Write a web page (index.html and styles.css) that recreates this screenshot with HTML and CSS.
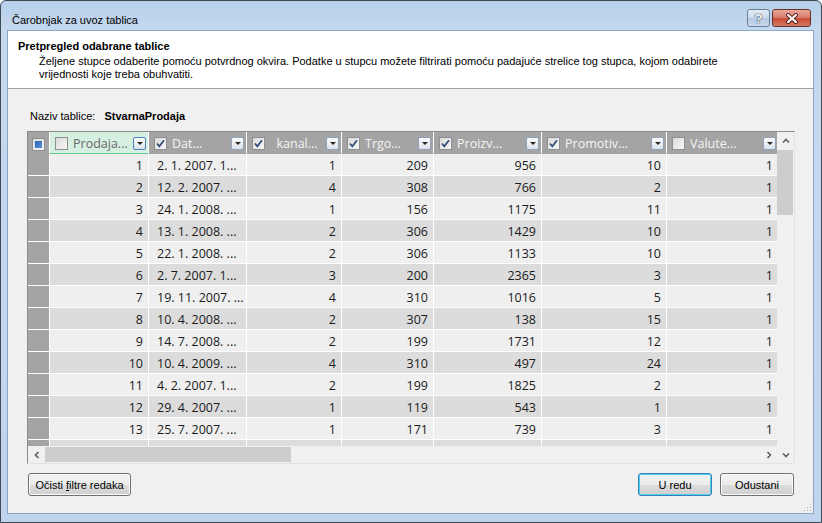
FILE: index.html
```html
<!DOCTYPE html>
<html lang="hr">
<head>
    <meta charset="UTF-8">
    <meta name="viewport" content="width=device-width, initial-scale=1.0">
    <title>Čarobnjak za uvoz tablica</title>
    <link rel="stylesheet" href="styles.css">
</head>
<body>
<div class="window">
    <div class="titlebar">
        <div class="title">Čarobnjak za uvoz tablica</div>
        <div class="tb-btn help">?</div>
        <div class="tb-btn close">
            <svg width="14" height="11" viewBox="0 0 14 11"><path d="M3 2 L11 9 M11 2 L3 9" stroke="#5b2620" stroke-width="4" stroke-linecap="round"/><path d="M3 2 L11 9 M11 2 L3 9" stroke="#fff" stroke-width="2" stroke-linecap="round"/></svg>
        </div>
    </div>
    <div class="client">
        <div class="header">
            <div class="head-title">Pretpregled odabrane tablice</div>
            <div class="head-desc">Željene stupce odaberite pomoću potvrdnog okvira. Podatke u stupcu možete filtrirati pomoću padajuće strelice tog stupca, kojom odabirete vrijednosti koje treba obuhvatiti.</div>
        </div>
        <div class="content">
            <div class="tablename"><span class="label">Naziv tablice:</span><b>StvarnaProdaja</b></div>
            <div class="grid">
                <div class="grid-main">
                    <div class="viewport">
                        <table>
                            <colgroup>
                                <col style="width:22px"><col style="width:99px"><col style="width:98px"><col style="width:95px"><col style="width:92px"><col style="width:108px"><col style="width:125px"><col style="width:112px">
                            </colgroup>
                            <thead>
                            <tr>
                                <th class="corner"><span class="chk mixed"></span></th>
                                <th class="sel"><div class="hc"><span class="chk"></span><span class="hname">Prodaja...</span><span class="dd"></span></div></th>
                                <th><div class="hc"><span class="chk"><svg width="11" height="11" viewBox="0 0 11 11"><path d="M2 5.5 L4.3 8.3 L9 2.2" fill="none" stroke="#34497a" stroke-width="1.7"/></svg></span><span class="hname">Dat...</span><span class="dd"></span></div></th>
                                <th><div class="hc"><span class="chk"><svg width="11" height="11" viewBox="0 0 11 11"><path d="M2 5.5 L4.3 8.3 L9 2.2" fill="none" stroke="#34497a" stroke-width="1.7"/></svg></span><span class="hname">&nbsp;&nbsp;kanal...</span><span class="dd"></span></div></th>
                                <th><div class="hc"><span class="chk"><svg width="11" height="11" viewBox="0 0 11 11"><path d="M2 5.5 L4.3 8.3 L9 2.2" fill="none" stroke="#34497a" stroke-width="1.7"/></svg></span><span class="hname">Trgo...</span><span class="dd"></span></div></th>
                                <th><div class="hc"><span class="chk"><svg width="11" height="11" viewBox="0 0 11 11"><path d="M2 5.5 L4.3 8.3 L9 2.2" fill="none" stroke="#34497a" stroke-width="1.7"/></svg></span><span class="hname">Proizv...</span><span class="dd"></span></div></th>
                                <th><div class="hc"><span class="chk"><svg width="11" height="11" viewBox="0 0 11 11"><path d="M2 5.5 L4.3 8.3 L9 2.2" fill="none" stroke="#34497a" stroke-width="1.7"/></svg></span><span class="hname">Promotiv...</span><span class="dd"></span></div></th>
                                <th><div class="hc"><span class="chk"></span><span class="hname">Valute...</span><span class="dd"></span></div></th>
                            </tr>
                            </thead>
                            <tbody>
                            <tr><td class="rh"></td><td class="num">1</td><td class="txt">2. 1. 2007. 1...</td><td class="num">1</td><td class="num">209</td><td class="num">956</td><td class="num">10</td><td class="num">1</td></tr>
                            <tr><td class="rh"></td><td class="num">2</td><td class="txt">12. 2. 2007. ...</td><td class="num">4</td><td class="num">308</td><td class="num">766</td><td class="num">2</td><td class="num">1</td></tr>
                            <tr><td class="rh"></td><td class="num">3</td><td class="txt">24. 1. 2008. ...</td><td class="num">1</td><td class="num">156</td><td class="num">1175</td><td class="num">11</td><td class="num">1</td></tr>
                            <tr><td class="rh"></td><td class="num">4</td><td class="txt">13. 1. 2008. ...</td><td class="num">2</td><td class="num">306</td><td class="num">1429</td><td class="num">10</td><td class="num">1</td></tr>
                            <tr><td class="rh"></td><td class="num">5</td><td class="txt">22. 1. 2008. ...</td><td class="num">2</td><td class="num">306</td><td class="num">1133</td><td class="num">10</td><td class="num">1</td></tr>
                            <tr><td class="rh"></td><td class="num">6</td><td class="txt">2. 7. 2007. 1...</td><td class="num">3</td><td class="num">200</td><td class="num">2365</td><td class="num">3</td><td class="num">1</td></tr>
                            <tr><td class="rh"></td><td class="num">7</td><td class="txt">19. 11. 2007. ...</td><td class="num">4</td><td class="num">310</td><td class="num">1016</td><td class="num">5</td><td class="num">1</td></tr>
                            <tr><td class="rh"></td><td class="num">8</td><td class="txt">10. 4. 2008. ...</td><td class="num">2</td><td class="num">307</td><td class="num">138</td><td class="num">15</td><td class="num">1</td></tr>
                            <tr><td class="rh"></td><td class="num">9</td><td class="txt">14. 7. 2008. ...</td><td class="num">2</td><td class="num">199</td><td class="num">1731</td><td class="num">12</td><td class="num">1</td></tr>
                            <tr><td class="rh"></td><td class="num">10</td><td class="txt">10. 4. 2009. ...</td><td class="num">4</td><td class="num">310</td><td class="num">497</td><td class="num">24</td><td class="num">1</td></tr>
                            <tr><td class="rh"></td><td class="num">11</td><td class="txt">4. 2. 2007. 1...</td><td class="num">2</td><td class="num">199</td><td class="num">1825</td><td class="num">2</td><td class="num">1</td></tr>
                            <tr><td class="rh"></td><td class="num">12</td><td class="txt">29. 4. 2007. ...</td><td class="num">1</td><td class="num">119</td><td class="num">543</td><td class="num">1</td><td class="num">1</td></tr>
                            <tr><td class="rh"></td><td class="num">13</td><td class="txt">25. 7. 2007. ...</td><td class="num">1</td><td class="num">171</td><td class="num">739</td><td class="num">3</td><td class="num">1</td></tr>
                            <tr><td class="rh"></td><td class="num"></td><td class="txt"></td><td class="num"></td><td class="num"></td><td class="num"></td><td class="num"></td><td class="num"></td></tr>
                            </tbody>
                        </table>
                    </div>
                    <div class="hscroll">
                        <div class="arrow"><svg width="6" height="8" viewBox="0 0 6 8"><path d="M4.5 1 L1.5 4 L4.5 7" fill="none" stroke="#5f5f5f" stroke-width="1.6"/></svg></div>
                        <div class="htrack"><div class="hthumb"></div></div>
                        <div class="arrow"><svg width="6" height="8" viewBox="0 0 6 8"><path d="M1.5 1 L4.5 4 L1.5 7" fill="none" stroke="#5f5f5f" stroke-width="1.6"/></svg></div>
                    </div>
                </div>
                <div class="vscroll">
                    <div class="arrow"><svg width="8" height="6" viewBox="0 0 8 6"><path d="M1 4.5 L4 1.5 L7 4.5" fill="none" stroke="#5f5f5f" stroke-width="1.6"/></svg></div>
                    <div class="vtrack"><div class="vthumb"></div></div>
                    <div class="arrow"><svg width="8" height="6" viewBox="0 0 8 6"><path d="M1 1.5 L4 4.5 L7 1.5" fill="none" stroke="#5f5f5f" stroke-width="1.6"/></svg></div>
                </div>
            </div>
            <div class="buttons">
                <button class="btn btn-clear">Očisti <u>f</u>iltre redaka</button>
                <div class="spacer"></div>
                <button class="btn btn-ok">U redu</button>
                <button class="btn btn-cancel">Odustani</button>
            </div>
        </div>
        <svg class="grip" width="10" height="10" viewBox="0 0 10 10" fill="#a9a9a9"><rect x="8" y="2" width="1" height="1"/><rect x="5" y="5" width="1" height="1"/><rect x="8" y="5" width="1" height="1"/><rect x="2" y="8" width="1" height="1"/><rect x="5" y="8" width="1" height="1"/><rect x="8" y="8" width="1" height="1"/></svg>
    </div>
</div>
</body>
</html>
```

FILE: styles.css
```css
* {
    margin: 0;
    padding: 0;
    box-sizing: border-box;
}
body {
    width: 822px;
    height: 523px;
    overflow: hidden;
    font-family: "Liberation Sans", Arial, sans-serif;
    font-size: 11px;
    color: #000;
    background: #fff;
}
.window {
    width: 822px;
    height: 523px;
    display: flex;
    flex-direction: column;
    border: 1px solid #3f4955;
    border-radius: 6px 6px 0 0;
    background: linear-gradient(#b7cfe9 0, #c5d9ef 30px, #bfd5ed 100%);
}
.titlebar {
    height: 29px;
    display: flex;
    align-items: flex-start;
    padding: 0 10px 0 11px;
}
.title {
    flex: 1;
    padding-top: 13px;
    line-height: 13px;
    font-size: 11px;
}
.tb-btn {
    margin-top: 8px;
    height: 18px;
    border-radius: 3px;
    display: flex;
    align-items: center;
    justify-content: center;
}
.help {
    width: 23px;
    margin-right: 2px;
    border: 1px solid #6c7d94;
    background: linear-gradient(#e3ecf6 0%, #cbdaeb 50%, #b4c8df 51%, #c9d9ec 100%);
    color: #fff;
    font-weight: bold;
    font-size: 13px;
    text-shadow: 0 0 1px #33435a, 0 0 1px #33435a, 0 0 1px #33435a;
}
.close {
    width: 39px;
    border: 1px solid #6b2f27;
    background: linear-gradient(#e8a79a 0%, #d8806e 45%, #c64b35 55%, #d77a63 100%);
}
.client {
    position: relative;
    flex: 1;
    margin: 0 7px 8px 6px;
    border: 1px solid #8da6c3;
    display: flex;
    flex-direction: column;
    background: #f0f0f0;
}
.header {
    height: 58px;
    background: #fff;
    border-bottom: 1px solid #a0a0a0;
    padding: 9px 0 0 10px;
    line-height: 13px;
}
.head-title {
    font-weight: bold;
}
.head-desc {
    margin-top: 2px;
    padding-left: 21px;
    width: 722px;
}
.content {
    flex: 1;
    display: flex;
    flex-direction: column;
    padding: 20px 18px 0 19px;
}
.tablename {
    line-height: 14px;
    padding-left: 3px;
}
.tablename .label {
    margin-right: 9px;
}
.grid {
    margin-top: 8px;
    width: 768px;
    height: 333px;
    display: flex;
    border: 1px solid;
    border-color: #8b8b8b #e3e3e3 #e3e3e3 #8b8b8b;
    background: #f0f0f0;
}
.grid-main {
    width: 749px;
    display: flex;
    flex-direction: column;
}
.viewport {
    height: 314px;
    overflow: hidden;
}
table {
    table-layout: fixed;
    border-collapse: separate;
    border-spacing: 0;
    width: 751px;
    font-family: "Open Sans", "Noto Sans", sans-serif;
    font-size: 12.5px;
    color: #1a1a1a;
}
th {
    height: 22px;
    padding: 0;
    background: #a4a4a4;
    border-right: 1px solid #fff;
    border-bottom: 1px solid #a4a4a4;
    font-weight: normal;
    color: #f4f4f4;
    text-align: left;
}
th.sel {
    background: #d5efe1;
    border-bottom-color: #67c793;
    color: #6a6a6a;
}
th.corner {
    text-align: center;
    padding-top: 2px;
}
.hc {
    display: flex;
    align-items: center;
    height: 21px;
    padding: 2px 2px 0 5px;
}
.hname {
    flex: 1;
    margin-left: 5px;
    white-space: nowrap;
    overflow: hidden;
}
.chk {
    display: inline-flex;
    align-items: center;
    justify-content: center;
    width: 13px;
    height: 13px;
    border: 1px solid #8e8f8f;
    background: linear-gradient(135deg, #dadada, #f7f7f7);
    vertical-align: middle;
}
.chk.mixed::after {
    content: "";
    width: 7px;
    height: 7px;
    background: linear-gradient(135deg, #2d62b8, #5c8fd8);
}
.dd {
    display: flex;
    align-items: center;
    justify-content: center;
    width: 13px;
    height: 13px;
    border: 1px solid #90a2bd;
    border-radius: 2px;
    background: linear-gradient(#fbfcfd, #dde3eb);
}
th.sel .dd {
    border-color: #4f7fbd;
}
.dd::after {
    content: "";
    border-left: 3px solid transparent;
    border-right: 3px solid transparent;
    border-top: 3px solid #262626;
}
td {
    height: 22px;
    padding: 3px 5px 0;
    line-height: 18px;
    border-right: 1px solid #fff;
    border-bottom: 1px solid #fff;
    background: #efefef;
    white-space: nowrap;
    overflow: hidden;
}
tbody tr:nth-child(even) td {
    background: #dcdcdc;
}
td.rh,
tbody tr:nth-child(even) td.rh {
    background: #a4a4a4;
}
td.num {
    text-align: right;
}
td.txt {
    padding-left: 8px;
}
.hscroll {
    height: 17px;
    display: flex;
    background: #f0f0f0;
}
.hscroll .arrow {
    width: 17px;
    display: flex;
    align-items: center;
    justify-content: center;
}
.htrack {
    flex: 1;
    padding: 1px 0;
}
.hthumb {
    width: 246px;
    height: 15px;
    background: #cdcdcd;
}
.vscroll {
    width: 17px;
    display: flex;
    flex-direction: column;
    background: #f0f0f0;
}
.vscroll .arrow {
    height: 17px;
    display: flex;
    align-items: center;
    justify-content: center;
}
.vtrack {
    flex: 1;
    padding: 1px 1px 0 0;
}
.vthumb {
    height: 65px;
    background: #cdcdcd;
}
.buttons {
    margin-top: 9px;
    display: flex;
    padding: 0 1px;
}
.spacer {
    flex: 1;
}
.btn {
    height: 23px;
    border: 1px solid #707070;
    border-radius: 3px;
    background: linear-gradient(#f2f2f2 0%, #ebebeb 50%, #dddddd 51%, #cfcfcf 100%);
    box-shadow: inset 0 0 0 1px #fbfbfb;
    font-family: "Liberation Sans", Arial, sans-serif;
    font-size: 11px;
    color: #000;
}
.btn-clear {
    width: 103px;
}
.btn-ok {
    width: 74px;
    border-color: #3c7fb1;
    box-shadow: inset 0 0 0 1px #48d2f8;
}
.btn-cancel {
    width: 74px;
    margin-left: 8px;
}
.grip {
    position: absolute;
    right: 1px;
    bottom: 1px;
}
```
